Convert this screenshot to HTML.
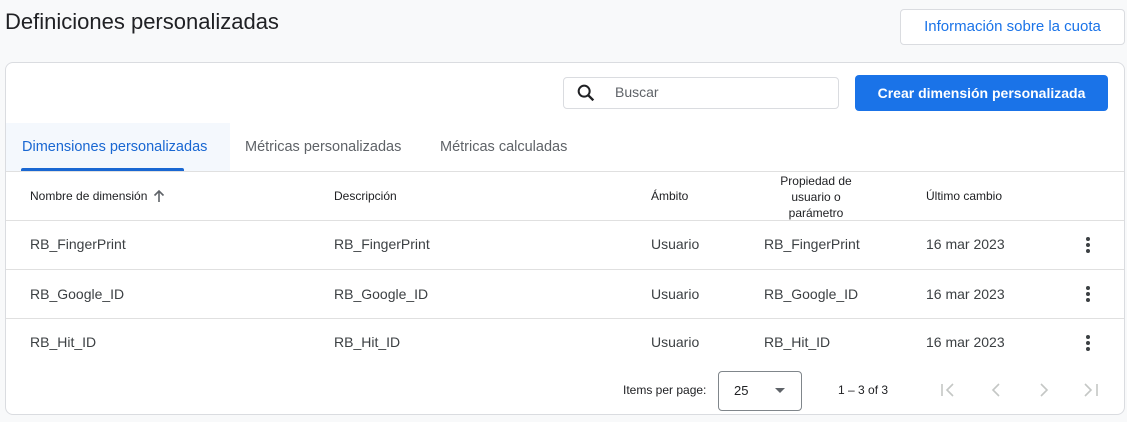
<!DOCTYPE html><html><head><meta charset="utf-8"><style>
*{box-sizing:border-box;margin:0;padding:0}
body{width:1127px;height:422px;background:#f8f9fa;font-family:"Liberation Sans",Arial,sans-serif;position:relative;overflow:hidden;color:#3c4043}
.a{position:absolute;white-space:nowrap}
.card{position:absolute;left:5px;top:62px;width:1120px;height:353px;background:#fff;border:1px solid #dadce0;border-radius:8px}
.h{font-size:12px;color:#202124}
.c{font-size:14px;color:#3c4043}
.line{position:absolute;left:6px;width:1118px;height:1px;background:#e0e0e0}
.dots{position:absolute;width:4px}
.dots i{display:block;width:4px;height:4px;border-radius:2px;background:#3c4043;margin-bottom:2px}
</style></head><body>
<div class="a" style="left:5px;top:9px;font-size:22px;color:#202124">Definiciones personalizadas</div>
<div class="a" style="left:900px;top:9px;width:225px;height:36px;background:#fff;border:1px solid #dadce0;border-radius:4px;color:#1a73e8;font-size:15px;text-align:center;line-height:34px">Información sobre la cuota</div>
<div class="card"></div>
<div class="a" style="left:563px;top:77px;width:276px;height:32px;border:1px solid #dadce0;border-radius:4px"></div>
<svg class="a" style="left:575px;top:82px" width="22" height="22" viewBox="0 0 24 24"><circle cx="10" cy="10" r="6" fill="none" stroke="#202124" stroke-width="2.2"/><path d="M14.5 14.5L20 20" stroke="#202124" stroke-width="2.6"/></svg>
<div class="a" style="left:615px;top:84px;font-size:14px;color:#5f6368">Buscar</div>
<div class="a" style="left:855px;top:75px;width:253px;height:36px;background:#1a73e8;border-radius:4px;color:#fff;font-size:14px;font-weight:bold;text-align:center;line-height:36px">Crear dimensión personalizada</div>
<div class="a" style="left:6px;top:123px;width:224px;height:48px;background:#f4f8fd"></div>
<div class="a" style="left:21px;top:168px;width:163px;height:3px;background:#1967d2;border-radius:2px 2px 0 0"></div>
<div class="a" style="left:22px;top:139px;font-size:14.5px;color:#1967d2">Dimensiones personalizadas</div>
<div class="a" style="left:245px;top:139px;font-size:14.5px;color:#5f6368">Métricas personalizadas</div>
<div class="a" style="left:440px;top:139px;font-size:14.5px;color:#5f6368">Métricas calculadas</div>
<div class="line" style="top:171px"></div>
<div class="a h" style="left:30px;top:189px">Nombre de dimensión</div>
<svg class="a" style="left:153px;top:189px" width="12" height="14" viewBox="0 0 12 14"><path d="M6 13V2M1.5 6.5L6 2l4.5 4.5" fill="none" stroke="#5f6368" stroke-width="1.6"/></svg>
<div class="a h" style="left:334px;top:189px">Descripción</div>
<div class="a h" style="left:651px;top:189px">Ámbito</div>
<div class="a h" style="left:766px;top:173px;width:100px;text-align:center;white-space:normal;line-height:16px">Propiedad de usuario o parámetro</div>
<div class="a h" style="left:926px;top:189px">Último cambio</div>
<div class="line" style="top:220px"></div>
<div class="line" style="top:269px"></div>
<div class="line" style="top:318px"></div>
<div class="a c" style="left:30px;top:236px">RB_FingerPrint</div><div class="a c" style="left:334px;top:236px">RB_FingerPrint</div><div class="a c" style="left:651px;top:236px">Usuario</div><div class="a c" style="left:764px;top:236px">RB_FingerPrint</div><div class="a c" style="left:926px;top:236px">16 mar 2023</div>
<div class="dots" style="left:1086px;top:237px"><i></i><i></i><i></i></div>
<div class="a c" style="left:30px;top:286px">RB_Google_ID</div><div class="a c" style="left:334px;top:286px">RB_Google_ID</div><div class="a c" style="left:651px;top:286px">Usuario</div><div class="a c" style="left:764px;top:286px">RB_Google_ID</div><div class="a c" style="left:926px;top:286px">16 mar 2023</div>
<div class="dots" style="left:1086px;top:286px"><i></i><i></i><i></i></div>
<div class="a c" style="left:30px;top:334px">RB_Hit_ID</div><div class="a c" style="left:334px;top:334px">RB_Hit_ID</div><div class="a c" style="left:651px;top:334px">Usuario</div><div class="a c" style="left:764px;top:334px">RB_Hit_ID</div><div class="a c" style="left:926px;top:334px">16 mar 2023</div>
<div class="dots" style="left:1086px;top:335px"><i></i><i></i><i></i></div>
<div class="a h" style="left:623px;top:383px">Items per page:</div>
<div class="a" style="left:718px;top:371px;width:84px;height:40px;border:1px solid #80868b;border-radius:4px"></div>
<div class="a" style="left:734px;top:383px;font-size:13px;color:#202124">25</div>
<div class="a" style="left:775px;top:388px;width:0;height:0;border-left:5px solid transparent;border-right:5px solid transparent;border-top:5px solid #5f6368"></div>
<div class="a h" style="left:838px;top:383px">1 – 3 of 3</div>
<svg class="a" style="left:935px;top:378px" width="170" height="24" viewBox="0 0 170 24" fill="none" stroke="#c4c7c5" stroke-width="1.6"><path d="M7 6v12M18 6l-6 6 6 6"/><path d="M64 6l-6 6 6 6"/><path d="M106 6l6 6-6 6"/><path d="M150 6l6 6-6 6M162 6v12"/></svg>
</body></html>
